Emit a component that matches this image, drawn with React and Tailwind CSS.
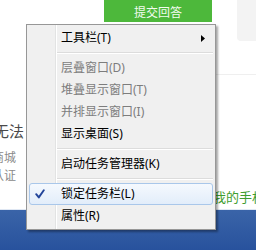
import React from "react";

const MenuItem = ({ label, disabled, checked, arrow, active }) => (
  <div
    className={`flex h-[22px] items-center rounded-[3px] border text-[12px] leading-[16px] ${
      active
        ? "border-[#a9c7ea] bg-gradient-to-b from-[#f5f9fe] to-[#e2edfa]"
        : "border-transparent"
    } ${disabled ? "text-[#7d7d7d]" : "text-black"}`}
  >
    {/* check column */}
    <div className="flex h-full w-[31px] items-center pl-[5px]">
      {checked && (
        <svg width="10" height="10" viewBox="0 0 10 10">
          <path
            d="M1.2 5.2 L3.8 8.4 L8.8 1.2"
            fill="none"
            stroke="#22449a"
            strokeWidth="1.9"
            strokeLinecap="round"
            strokeLinejoin="round"
          />
        </svg>
      )}
    </div>
    <span>{label}</span>
    {arrow && (
      <svg className="ml-auto mr-[7px]" width="4" height="7" viewBox="0 0 4 7">
        <path d="M0 0 L4 3.5 L0 7 Z" fill="#000" />
      </svg>
    )}
  </div>
);

const Separator = () => (
  <div className="flex h-[8px] items-center pl-[28px]">
    <div className="h-[2px] w-full border-t border-b border-t-[#dcdcdc] border-b-white" />
  </div>
);

const App = () => {
  return (
    <div className="relative h-[250px] w-[256px] overflow-hidden bg-white font-['Noto_Sans','Noto_Sans_CJK_SC',sans-serif]">
      {/* page behind the menu */}
      <div className="flex h-[250px] flex-col">
        {/* top strip */}
        <div className="flex h-[41px] items-start">
          <div className="ml-[104px] h-[22px] w-[108px] bg-[#4db83b] pt-[5px] text-center text-[12px] leading-[16px] text-[#f2fbef]">
            提交回答
          </div>
          <div className="ml-auto h-[41px] w-[19px] rounded-bl-[4px] bg-[#f3f3f3]" />
        </div>
        <div className="mt-[33px] ml-[216px] h-px bg-[#efefef]" />

        {/* left text column (cropped by the window edge) */}
        <div className="mt-[46px] ml-[-6px] text-[15px] leading-[20px] text-[#4a4a4a]">
          无法
        </div>
        <div className="mt-[9px] ml-[-8px] text-[12px] leading-[16px] text-[#8a8a8a]">
          商城
        </div>
        <div className="mt-[2px] ml-[-8px] text-[12px] leading-[16px] text-[#8a8a8a]">
          认证
        </div>
        <div className="mt-[5px] ml-[213px] whitespace-nowrap text-[13px] leading-[16px] text-[#3f9d2f]">
          我的手机
        </div>

        {/* taskbar */}
        <div className="mt-auto h-[41px] border-t border-[#dfe7f3] bg-gradient-to-b from-[#3a64a8] to-[#28529d]" />
      </div>

      {/* context menu */}
      <div className="absolute left-[26px] top-[24px] w-[190px] border border-[#979797] bg-[linear-gradient(to_right,#f0f0f0_28px,#e2e3e3_28px,#e2e3e3_29px,#ffffff_29px,#ffffff_30px,#f0f0f0_30px)] px-[2px] py-[2px] shadow-[2px_2px_2px_rgba(0,0,0,0.35)]">
        <MenuItem label="工具栏(T)" arrow />
        <Separator />
        <MenuItem label="层叠窗口(D)" disabled />
        <MenuItem label="堆叠显示窗口(T)" disabled />
        <MenuItem label="并排显示窗口(I)" disabled />
        <MenuItem label="显示桌面(S)" />
        <Separator />
        <MenuItem label="启动任务管理器(K)" />
        <Separator />
        <MenuItem label="锁定任务栏(L)" checked active />
        <MenuItem label="属性(R)" />
      </div>
    </div>
  );
};

export default App;
